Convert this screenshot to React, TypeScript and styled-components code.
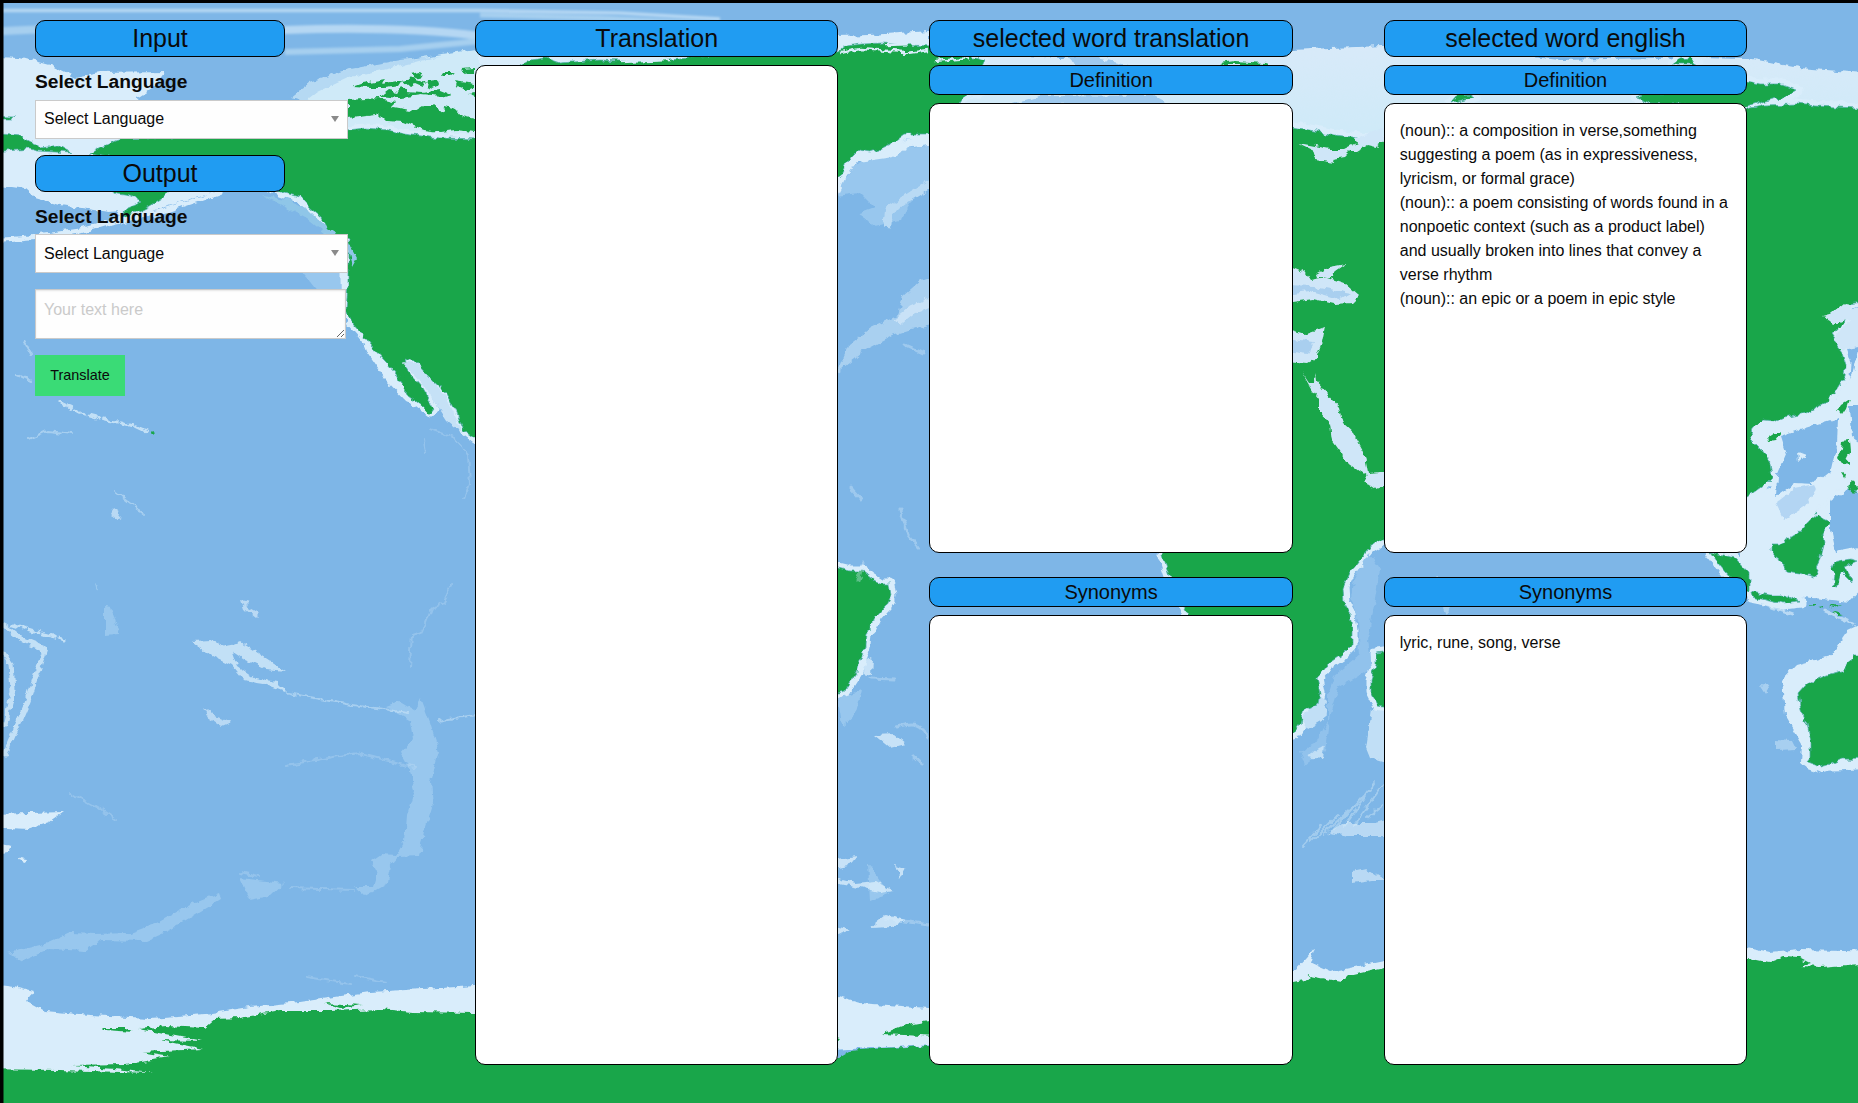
import React from "react";
import styled, { createGlobalStyle } from "styled-components";

const GlobalStyle = createGlobalStyle`
  *, *::before, *::after { box-sizing: border-box; }
  html, body { margin: 0; padding: 0; background: #000; }
  body { font-family: "Liberation Sans", Arial, sans-serif; color: #0a0a0a; overflow: hidden; }
`;

const Page = styled.div`
  position: relative;
  width: 1858px;
  height: 1103px;
  overflow: hidden;
  isolation: isolate;
`;

const MapLayer = styled.svg`
  position: absolute;
  inset: 0;
  z-index: -1;
  display: block;
`;

const Columns = styled.main`
  display: grid;
  grid-template-columns: 349px repeat(3, 363.4px);
  column-gap: 91px;
  padding: 20px 0 0 35px;
`;

const Form = styled.form`
  width: 313px;
`;

const Column = styled.section`
  display: flex;
  flex-direction: column;
  gap: 8px;
  min-width: 0;
`;

const Groups = styled.div`
  display: flex;
  flex-direction: column;
  gap: 24px;
`;

const Group = styled.div`
  display: flex;
  flex-direction: column;
  gap: 8px;
`;

const Heading = styled.h4<{ $width?: string; $small?: boolean }>`
  margin: 0;
  width: ${(p) => p.$width ?? "100%"};
  border: 1px solid #000;
  border-radius: 10px;
  background: #209cf2;
  color: #0a0a0a;
  font-weight: 400;
  font-size: ${(p) => (p.$small ? "20px" : "25px")};
  line-height: ${(p) => (p.$small ? "28px" : "35px")};
  text-align: center;
`;

const Panel = styled.div<{ $height: number }>`
  height: ${(p) => p.$height}px;
  padding: 15px;
  border: 1px solid #000;
  border-radius: 10px;
  background: #fff;
  font-size: 16px;
  line-height: 24px;
`;

const Entry = styled.div``;

const Label = styled.label<{ $height: number }>`
  display: block;
  height: ${(p) => p.$height}px;
  margin-top: 8px;
  font-size: 19.2px;
  font-weight: 700;
  line-height: 33px;
`;

const SelectWrap = styled.div`
  position: relative;
  height: 39px;
  margin-bottom: 16px;
`;

const Select = styled.select<{ $low?: boolean }>`
  appearance: none;
  display: block;
  width: 100%;
  height: 39px;
  margin: 0;
  padding: 0 24px ${(p) => (p.$low ? "0" : "2px")} 8px;
  border: 1px solid #cacaca;
  border-radius: 0;
  background: #fefefe;
  color: #0a0a0a;
  font: 16px/24px "Liberation Sans", Arial, sans-serif;
`;

const Arrow = styled.svg`
  position: absolute;
  right: 9px;
  top: 16px;
`;

const TextArea = styled.textarea`
  display: block;
  width: 311px;
  height: 50px;
  margin: 0 0 16px;
  padding: 8px;
  border: 1px solid #cacaca;
  border-radius: 0;
  background: #fefefe;
  box-shadow: inset 0 1px 2px rgba(10, 10, 10, 0.1);
  font: 16px/24px "Liberation Sans", Arial, sans-serif;
  resize: both;
  overflow: hidden;
  &::placeholder { color: #cacaca; }
`;

const Button = styled.button`
  display: block;
  width: 90px;
  height: 41px;
  padding: 0;
  border: 0;
  background: #3adb76;
  color: #0a0a0a;
  font: 14.4px/14.4px "Liberation Sans", Arial, sans-serif;
`;

const SEA = "#7eb6e7";
const LAND = "#19a64a";
const SHELF = "#d9edfb";
const ICE = "#cfeaf8";
const RIDGE = "#98c7ee";

const coasts = [
  // North America
  "M348 130L365 128L388 130L402 134L440 138L480 139L510 75L520 66L530 60L545 58L560 63L600 60L640 62L690 57L740 52L800 48L838 52L846 46L862 44L882 43L905 45L935 46L985 60L970 90L962 100L945 125L929 134L905 134L893 143L880 149L870 152L858 150L850 158L840 175L835 182L800 300L640 500L520 460L475 439L463 430L456 411L446 393L432 380L414 361L404 358L408 372L422 388L434 409L431 413L418 403L407 395L397 374L386 362L370 345L360 332L352 323L346 310L348 285L348 240L330 232L322 218L310 208L300 197L285 193L250 180L90 154L102 147L115 141L122 139Z",
  // Alaska peninsula
  "M110 190L170 190L163 198L150 206L138 212L122 218L128 208L143 202L132 196L118 194Z",
  // Siberian tip
  "M-20 132L20 136L33 143L42 148L58 145L64 149L72 153L55 152L38 151L30 149L-20 153Z",
  "M-20 116L16 117L13 119L-20 119Z",
  // South America
  "M820 560L838 568L850 571L862 571L872 579L880 584L889 584L891 596L886 606L876 617L871 628L866 632L865 646L860 660L857 672L850 683L845 691L838 693L820 690Z",
  // Africa, Europe and Asia
  "M1200 130L1293 127L1310 130L1335 135L1384 141L1480 120L1740 116L1747 109L1765 105L1797 104L1815 106L1858 108L1890 110L1890 298L1848 304L1845 318L1843 325L1835 332L1833 340L1842 352L1846 365L1845 376L1836 390L1827 402L1805 413L1785 417L1775 421L1762 420L1752 429L1749 438L1761 450L1770 463L1772 477L1764 485L1747 497L1725 500L1600 480L1384 538L1370 547L1359 561L1349 574L1343 587L1344 603L1350 614L1352 630L1352 645L1342 655L1327 665L1317 678L1320 693L1318 704L1304 710L1301 724L1293 735L1250 740L1200 660L1186 610L1172 582L1163 555L1200 400Z",
  "M1747 81L1760 84L1780 84L1797 90L1788 96L1765 101L1747 107L1650 103L1637 98L1650 93L1740 91Z",
  "M1450 103L1456 96L1470 94L1474 97Z M1673 64L1680 59L1690 58L1697 64Z",
  // Madagascar
  "M1400 650L1376 653L1376 665L1371 680L1371 692L1378 706L1400 710Z",
  // Australia
  "M1890 655L1854 655L1849 663L1843 671L1827 675L1806 684L1798 693L1801 710L1807 724L1811 742L1811 757L1807 762L1821 767L1831 764L1842 759L1890 760Z",
  // Borneo
  "M1771 544L1780 544L1798 533L1810 520L1818 513L1823 520L1830 523L1823 533L1824 545L1821 557L1815 577L1800 573L1786 571L1779 558L1771 552Z",
  // Java and Sumatra
  "M1751 591L1770 595L1785 595L1801 602L1783 604L1766 600L1752 597Z",
  "M1710 552L1735 558L1749 573L1749 590L1744 591L1733 580L1725 571Z",
  "M1834 562L1849 559L1858 561L1844 567L1852 581L1849 580L1841 572L1838 586L1833 585L1835 574L1831 569Z",
];

const islands = [
  "M348 100L380 98L396 102L390 108L375 115L360 117L348 118Z",
  "M353 87L364 83L386 79L382 84L402 80L398 86L384 88L370 88Z",
  "M380 96L388 90L397 92L401 87L407 92L422 93L440 90L450 94L440 97L421 95L400 98Z",
  "M376 111L394 107L415 111L423 106L433 106L442 113L444 106L456 109L462 116L475 119L475 132L455 130L441 132L424 130L404 122L386 121Z",
  "M402 80L413 78L426 82L422 86L415 83L410 87Z M411 75L419 73L423 76L415 78Z M428 80L437 79L439 85L433 88L427 86Z M442 73L456 73L451 76L440 76Z",
  "M454 81L475 84L475 88L466 90L458 87Z M461 69L475 68L475 73L466 73Z M467 94L475 93L475 97Z",
  "M1220 63L1235 61L1265 63L1271 65L1225 65Z",
  "M1841 405L1849 400L1846 409L1842 415L1838 410Z",
  "M1842 441L1850 440L1851 451L1847 459L1850 466L1843 465L1838 458L1841 450Z",
  "M1768 436L1774 432L1781 432L1775 440L1769 441Z M1847 485L1853 480L1858 488L1853 493Z M1842 473L1846 474L1845 478Z",
  "M1808 605L1815 605L1813 607Z M1818 606L1824 605L1822 608Z M1828 606L1843 604L1834 608Z M1832 612L1842 615L1836 615Z",
  "M151 433L153 431L156 433L154 435Z",
];

const inlandWater = [
  "M1298 143L1315 146L1330 149L1345 149L1357 143L1355 138L1384 128L1384 141L1376 147L1368 145L1358 151L1350 151L1344 157L1332 159L1335 163L1316 160L1313 150Z",
  "M1285 264L1300 270L1306 274L1310 280L1326 277L1344 283L1359 296L1352 303L1334 304L1313 299L1285 303Z",
  "M1317 274L1330 267L1345 264L1335 271L1333 277L1318 277Z",
  "M1285 328L1305 334L1325 327L1322 342L1315 360L1308 364L1285 362Z",
  "M1301 370L1309 382L1314 382L1316 373L1317 382L1327 394L1339 408L1343 424L1354 434L1364 452L1368 473L1390 471L1390 484L1376 490L1366 483L1363 481L1367 477L1345 461L1342 454L1332 440L1330 424L1320 412L1320 400L1313 391Z",
  "M1822 316L1833 313L1845 303L1851 304L1850 310L1870 308L1870 345L1842 350L1833 340L1850 319L1834 325L1829 320Z",
];

const antarctica =
  "M-20 1069L60 1070L152 1073L115 1069L70 1066L125 1065L158 1059L171 1057L140 1052L204 1049L160 1040L202 1041L165 1034L138 1029L165 1026L205 1028L216 1019L240 1018L280 1011L330 1011L380 1009L412 1012L475 1013L640 1040L838 1058L850 1051L885 1048L929 1046L1100 1030L1293 983L1303 981L1310 976L1325 979L1342 982L1348 976L1384 968L1500 950L1747 958L1762 961L1770 962L1783 957L1800 958L1810 963L1800 966L1820 967L1890 962L1890 1140L-20 1140Z";

const antarcticIce =
  "M-20 983L15 987L34 992L27 1001L45 1011L90 1015L150 1018L205 1014L250 1007L300 1002L370 992L475 986L700 986L838 997L860 1003L929 1008L1200 1000L1293 972L1307 957L1315 947L1310 963L1330 972L1384 961L1500 945L1747 947L1770 952L1800 949L1890 951L1890 1000L-20 1090Z";

function WorldMap() {
  return (
    <MapLayer width="1858" height="1103" viewBox="0 0 1858 1103" aria-hidden="true">
      <defs>
        <filter
          id="rough"
          x="-30"
          y="-30"
          width="1918"
          height="1170"
          filterUnits="userSpaceOnUse"
          colorInterpolationFilters="sRGB"
        >
          <feTurbulence type="fractalNoise" baseFrequency="0.13" numOctaves="2" seed="4" result="n" />
          <feDisplacementMap in="SourceGraphic" in2="n" scale="7" xChannelSelector="R" yChannelSelector="G" />
          <feGaussianBlur stdDeviation="0.6" />
        </filter>
        <filter id="soft" x="-30" y="-30" width="1918" height="1170" filterUnits="userSpaceOnUse">
          <feGaussianBlur stdDeviation="1.2" />
        </filter>
        <linearGradient id="whiteSea" x1="0" x2="0" y1="45" y2="130" gradientUnits="userSpaceOnUse">
          <stop offset="0" stopColor="#d8eaf9" />
          <stop offset="1" stopColor={ICE} />
        </linearGradient>
      </defs>
      <rect width="1858" height="1103" fill={SEA} />
      <g fill="none" filter="url(#soft)">
        <path d="M-10 10.500H480L620 13L720 19" stroke="#b5d7f3" strokeWidth="3.500" />
        <path d="M180 31L285 30Q400 26 480 36L560 40" stroke="#b5d7f3" strokeWidth="8" />
        <path d="M480 15L600 18L760 26L838 34" stroke="#a6cfef" strokeWidth="5" />
        <path d="M-10 32Q60 27 120 31T260 35" stroke="#a6cfef" strokeWidth="8" />
        <path d="M285 52L400 49L480 41" stroke="#a6cfef" strokeWidth="6" />
      </g>
      <g filter="url(#rough)">
        {/* polar ice and shallow shelves */}
        <path d="M-20 55L20 57L50 65L75 78L100 73L165 72L152 89L138 98L145 135L120 154L250 170L210 193L155 208L110 212L60 205L35 198L25 189L-20 182Z" fill={SHELF} />
        <path d="M303 100L320 88L335 78L370 67L410 59L475 49L520 42L570 50L660 52L660 70L475 145L340 145Z" fill={ICE} />
        <path d="M290 98L310 82L345 70L400 60L440 56L400 66L350 77L318 92L306 101Z" fill="#b5d9f3" />
        <path d="M480 45L640 38L838 36L870 35L929 31L929 49L838 48L660 65L480 65Z" fill={SHELF} />
        <path d="M929 50L1060 58L1200 53L1293 50L1330 48L1384 46L1450 48L1560 60L1700 57L1747 58L1800 68L1890 75L1890 125L1293 145L1240 130L929 110Z" fill="url(#whiteSea)" />
        <path d="M1065 56L1085 55L1135 67L1080 67ZM1010 105L1045 95L1155 96L1170 104Z" fill="#9ec9ee" />
        <path d="M-10 241L30 238L80 231L110 222L160 212L200 199L222 191" fill="none" stroke={SHELF} strokeWidth="5" />
        <path d="M120 220L175 204L210 192L180 191Z" fill={SHELF} />
        <path d="M835 196L855 165L890 150L935 145L935 175L915 195L900 220L875 226L858 214L875 208L860 193Z" fill={RIDGE} />
        <path d="M832 196L843 174L855 158L890 153L908 143L935 140" fill="none" stroke={SHELF} strokeWidth="9" />
        <path d="M935 181L912 195L889 211L887 228" fill="none" stroke="#b9daf4" strokeWidth="8" />
        <path d="M935 276L920 281L903 296L898 315L870 328L848 345L836 374L862 352L892 336L935 323Z" fill="#a9d0f0" />
        <path d="M935 300L912 310L897 322" fill="none" stroke="#c9e2f7" strokeWidth="8" />
        {/* continental shelf */}
        {coasts.map((d, i) => (
          <path key={i} d={d} fill={SHELF} stroke={SHELF} strokeWidth={i === 0 ? 9 : 11} strokeLinejoin="round" />
        ))}
        <path d="M300 270L340 272L348 310L325 300Z" fill={RIDGE} />
        <path d="M340 255L347 260L347 320L341 300Z" fill={SHELF} />
        <path d="M360 335L380 343L390 358L397 378L411 398L429 412L407 402L385 379L367 353Z" fill={SHELF} />
        <path d="M1369 553L1355 578L1350 596L1358 620L1360 655L1335 675L1328 695L1328 720L1316 743L1300 751L1305 765L1325 750L1330 713L1338 688L1372 668L1368 640L1380 570Z" fill="#91c2ec" />
        <path d="M1318 694L1327 702L1325 719L1308 729L1302 721Z M1306 757L1324 745L1322 759Z M1372 709L1390 712L1390 764L1370 758L1366 748Z" fill="#c1dff6" />
        <path d="M1890 345L1858 350L1852 375L1835 400L1760 422L1745 440L1766 456L1772 488L1740 500L1740 590L1850 602L1890 560Z" fill={SHELF} />
        <path d="M1780 436L1805 428L1838 418L1837 444L1831 470L1814 484L1795 483L1776 497L1777 476L1786 455Z M1850 405H1880V457L1852 436Z M1830 500L1850 488L1880 505V543L1835 552L1830 530Z" fill={SEA} />
        <path d="M1776 503L1795 488L1820 483L1806 505L1784 519Z" fill="#b3d5f3" />
        <path d="M1798 452L1806 455L1799 461Z M1812 482L1820 478L1824 485L1816 490Z" fill={SHELF} />
        <path d="M1782 680L1796 665L1830 656L1848 630L1890 610V650L1840 678L1803 691L1799 714L1808 742L1808 762L1890 760V768L1821 771L1801 763L1802 744L1785 715Z" fill={SHELF} />
        <path d={antarcticIce} fill={SHELF} />
        {/* land */}
        {coasts.map((d, i) => (
          <path key={i} d={d} fill={LAND} stroke="#52aead" strokeWidth="0.7" />
        ))}
        <path d="M262 196L288 199L310 211L333 233L349 243L357 258L352 267L346 244L326 234L306 218L286 207Z" fill="#8fc6e8" />
        {islands.map((d, i) => (
          <path key={i} d={d} fill={LAND} />
        ))}
        <path d={antarctica} fill={LAND} />
        <path d="M103 1028L127 1028L133 1032L105 1030Z M324 1003L363 1005L340 1008Z M828 1036L841 1038L835 1045Z M882 1034L902 1026L935 1020V1037L905 1035Z" fill={LAND} />
        {inlandWater.map((d, i) => (
          <path key={i} d={d} fill="#cfe6f8" />
        ))}
        <path d="M1285 285L1315 286L1350 293L1340 299L1310 291L1285 294ZM1285 338L1315 342L1308 354L1285 351Z" fill="#a9cfef" />
        <path d="M402 361L414 363L433 381L446 397L458 421L462 433L447 421L429 393Z" fill="#c5e1f6" />
        <path d="M394 360L401 371L407 382L417 391L432 410L429 414L417 400L404 390Z" fill={LAND} />
        <path d="M840 53L860 49L905 52M886 45L915 44M902 54L929 50M935 61L970 58M965 99L985 95M620 62L670 60" fill="none" stroke={SHELF} strokeWidth="2.500" />
        {/* mid-ocean ridges and seamounts */}
        <g fill={RIDGE}>
          <path d="M8 953L48 943L70 933L95 934L130 933L160 922L190 905L220 893L222 899L195 915L170 930L145 941L100 940L85 951L50 949L22 961Z" />
          <path d="M240 878L284 883L270 896L250 900Z" />
          <path d="M354 886L373 886L377 872L371 861L381 854L397 855L405 841L407 815L414 791L410 770L401 754L413 739L410 721L386 707L400 702L415 711L421 699L430 723L439 752L431 781L433 804L424 832L420 856L398 857L391 865L388 883L365 896Z" />
          <path d="M105 606L111 607L119 634L105 635Z M94 582L98 585L96 591Z M838 698L862 690L856 713L842 726Z M868 862L889 894L870 901Z" />
        </g>
        <g fill={SHELF}>
          <path d="M192 641L210 640L225 646L242 643L258 653L286 671L265 669L245 660L233 652L238 666L255 678L277 682L288 693L263 684L244 681L232 666L211 656Z" opacity="0.75" />
          <path d="M-10 814L64 812L50 822L28 829L-10 827Z M-10 842L12 846L8 852L-10 855Z M20 857L27 858L25 862L19 860Z" />
          <path d="M242 600L250 602L246 606L260 614L256 618L245 609Z M203 707L212 714L231 722L222 726L208 717Z M113 508L120 513L119 521L110 514Z" opacity="0.65" />
          <path d="M874 735L894 734L906 744L890 748Z M830 860L857 856L849 866L830 870Z M830 877L855 883L876 881L894 891L879 893L860 888L830 882Z M830 924L852 929L830 937Z M895 866L906 869L900 879Z M870 927L885 915L905 920L892 926Z M864 657L873 661L872 675L863 673Z" opacity="0.8" />
          <path d="M1352 872L1366 869L1384 880L1372 880L1352 883Z M1327 833L1343 823L1375 823L1390 819V836L1350 836Z" opacity="0.65" />
          <path d="M1760 684L1771 685L1766 693Z M1776 740L1792 741L1796 749L1776 750Z M1431 577L1438 576L1451 610L1447 615Z" opacity="0.45" />
        </g>
        <g fill="none" stroke={SHELF} strokeLinecap="round">
          <path d="M3 624L23 640L45 649L28 701L5 754M3 653L11 664L13 690L5 725" strokeWidth="5" opacity="0.75" />
          <path d="M13 625L65 640M60 402L82 413L112 421L134 426L149 433" strokeWidth="3" strokeDasharray="7 3 2 4" opacity="0.75" />
          <path d="M29 439L47 431L73 434M115 492L144 514M16 374L31 381M24 341L32 356M288 693L345 704L383 709L408 713M437 721L475 715" strokeWidth="2" opacity="0.45" />
          <path d="M424 440L426 453M455 438L468 455L470 484L464 499M430 429L455 438M452 585L444 602L431 610L423 631L412 635L410 667M286 765L358 753L415 768M289 888L354 890M71 793L97 807L117 820M240 873L258 877M306 977L350 984M355 976L386 982" strokeWidth="2" opacity="0.25" />
          <path d="M870 679L895 680M858 581L863 564M897 727Q924 718 926 737M912 756L921 764M885 918L929 925M905 345L923 353M900 509L908 535L918 547M850 487L862 500" strokeWidth="3" opacity="0.35" />
          <path d="M1303 846L1322 825M1311 842L1338 815M1323 834L1354 806M1334 829L1364 795M1344 827L1374 783M1354 825L1383 785M1367 818L1383 805" strokeWidth="2" opacity="0.4" />
          <path d="M1815 512L1838 492M1756 601L1793 614M1825 611L1853 624M1845 480L1858 475" strokeWidth="3" opacity="0.65" />
        </g>
      </g>
      <path d="M0 0H1858V3H3.500V1103H0Z" fill="#000" />
    </MapLayer>
  );
}

function LanguageSelect({ id, low }: { id: string; low?: boolean }) {
  return (
    <SelectWrap>
      <Select id={id} defaultValue="" $low={low}>
        <option value="">Select Language</option>
      </Select>
      <Arrow width="8" height="6" viewBox="0 0 8 6">
        <path d="M0 0H8L4 6Z" fill="#8a8a8a" />
      </Arrow>
    </SelectWrap>
  );
}

type WordProps = { title: string; definitions?: string[]; synonyms?: string };

function WordColumn({ title, definitions = [], synonyms }: WordProps) {
  return (
    <Column>
      <Heading>{title}</Heading>
      <Groups>
        <Group>
          <Heading as="h5" $small>Definition</Heading>
          <Panel $height={450}>
            {definitions.map((d) => (
              <Entry key={d}>{d}</Entry>
            ))}
          </Panel>
        </Group>
        <Group>
          <Heading as="h5" $small>Synonyms</Heading>
          <Panel $height={450}>{synonyms}</Panel>
        </Group>
      </Groups>
    </Column>
  );
}

export default function App() {
  return (
    <Page>
      <GlobalStyle />
      <WorldMap />
      <Columns>
        <Form>
          <Heading $width="250px">Input</Heading>
          <Label htmlFor="from" $height={35}>Select Language</Label>
          <LanguageSelect id="from" />
          <Heading $width="250px">Output</Heading>
          <Label htmlFor="to" $height={34}>Select Language</Label>
          <LanguageSelect id="to" low />
          <TextArea placeholder="Your text here" />
          <Button type="button">Translate</Button>
        </Form>
        <Column>
          <Heading>Translation</Heading>
          <Panel $height={1000} />
        </Column>
        <WordColumn title="selected word translation" />
        <WordColumn
          title="selected word english"
          definitions={[
            "(noun):: a composition in verse,something suggesting a poem (as in expressiveness, lyricism, or formal grace)",
            "(noun):: a poem consisting of words found in a nonpoetic context (such as a product label) and usually broken into lines that convey a verse rhythm",
            "(noun):: an epic or a poem in epic style",
          ]}
          synonyms="lyric, rune, song, verse"
        />
      </Columns>
    </Page>
  );
}
